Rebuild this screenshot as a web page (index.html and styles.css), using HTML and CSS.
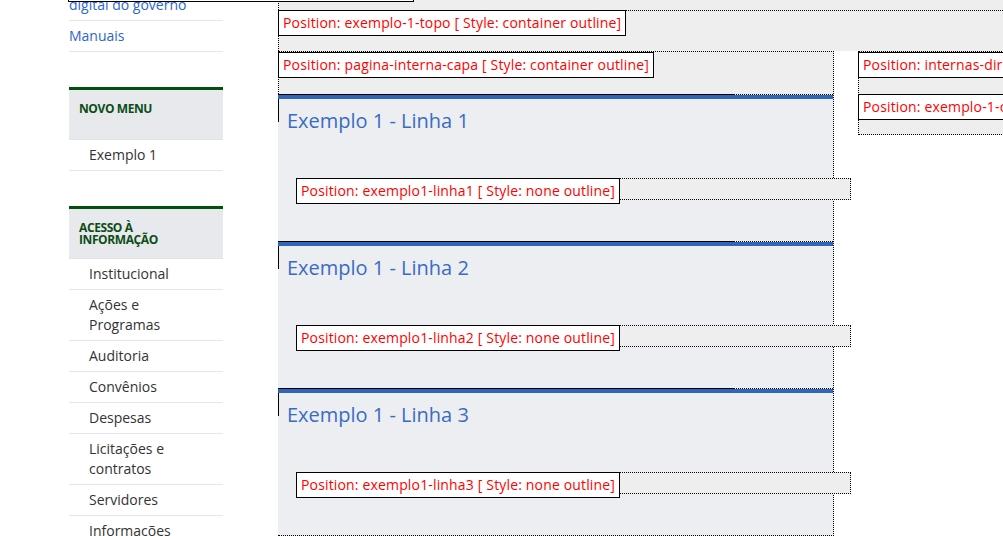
FILE: index.html
```html
<!DOCTYPE html>
<html lang="pt-BR">
<head>
<meta charset="utf-8">
<title>Layout</title>
<link rel="stylesheet" href="styles.css">
</head>
<body>
<div class="ghost-label"></div>
<div class="layout">
  <aside class="sidebar">
    <ul class="links">
      <li><a href="#">Identidade<br>digital do governo</a></li>
      <li><a href="#">Manuais</a></li>
    </ul>
    <section class="portlet">
      <h2 class="portlet-head">NOVO MENU</h2>
      <ul class="menu">
        <li>Exemplo 1</li>
      </ul>
    </section>
    <section class="portlet">
      <h2 class="portlet-head">ACESSO À INFORMAÇÃO</h2>
      <ul class="menu">
        <li>Institucional</li>
        <li>Ações e<br>Programas</li>
        <li>Auditoria</li>
        <li>Convênios</li>
        <li>Despesas</li>
        <li>Licitações e<br>contratos</li>
        <li>Servidores</li>
        <li>Informações</li>
      </ul>
    </section>
  </aside>
  <main class="main">
    <div class="strip"></div>
    <div class="topo">
      <div class="label overlap">Position: exemplo-1-topo [ Style: container outline]</div>
    </div>
    <div class="cols">
      <div class="col-left">
        <div class="label">Position: pagina-interna-capa [ Style: container outline]</div>
        <div class="sections">
          <section class="sec">
            <div class="bar"></div>
            <div class="sec-body">
              <h3 class="sec-title">Exemplo 1 - Linha 1</h3>
              <div class="slot"><div class="label overlap">Position: exemplo1-linha1 [ Style: none outline]</div></div>
            </div>
          </section>
          <section class="sec">
            <div class="bar"></div>
            <div class="sec-body">
              <h3 class="sec-title">Exemplo 1 - Linha 2</h3>
              <div class="slot"><div class="label overlap">Position: exemplo1-linha2 [ Style: none outline]</div></div>
            </div>
          </section>
          <section class="sec">
            <div class="bar"></div>
            <div class="sec-body">
              <h3 class="sec-title">Exemplo 1 - Linha 3</h3>
              <div class="slot"><div class="label overlap">Position: exemplo1-linha3 [ Style: none outline]</div></div>
            </div>
          </section>
        </div>
      </div>
      <div class="col-right">
        <div class="label">Position: internas-direita [ Style: container outline]</div>
        <div class="inner">
          <div class="label overlap">Position: exemplo-1-coluna-direita [ Style: none outline]</div>
        </div>
      </div>
    </div>
  </main>
</div>
</body>
</html>
```
FILE: styles.css
```css
* { box-sizing: border-box; }
html, body { margin: 0; padding: 0; }
body {
  background: #fff;
  font-family: "Open Sans", "DejaVu Sans", sans-serif;
  width: 1003px;
  height: 536px;
  overflow: hidden;
  position: relative;
}
.ghost-label {
  position: absolute;
  left: 68px;
  top: -30px;
  width: 346px;
  height: 32px;
  border: 1px solid #000;
  background: #fff;
  z-index: 5;
}
.layout {
  display: flex;
  align-items: flex-start;
}
.sidebar {
  width: 154px;
  flex: none;
  margin-left: 69px;
  margin-top: -30px;
}
.sidebar ul { list-style: none; margin: 0; padding: 0; }
.links li {
  border-bottom: 1px solid #e6e6e6;
  padding: 5px 0;
  font-size: 14px;
  line-height: 20px;
}
.links a { color: #2c66ce; text-decoration: none; }
.portlet {
  margin-top: 35px;
  border-top: 3px solid #00500f;
}
.portlet-head {
  margin: 0;
  height: 50px;
  padding: 13px 40px 0 10px;
  background: #e8e9ec;
  border-bottom: 1px solid #e2e3e6;
  color: #0b4d16;
  font-size: 12px;
  line-height: 12px;
  font-weight: 700;
  letter-spacing: -0.4px;
}
.menu li {
  border-bottom: 1px solid #e6e6e6;
  padding: 5px 0 5px 20px;
  font-size: 14px;
  line-height: 20px;
  color: #333;
}
.main {
  flex: 1;
  margin-left: 55px;
  min-width: 0;
}
.strip {
  height: 10px;
  background: #eee;
  border-left: 1px dotted #000;
}
.label {
  display: inline-block;
  background: #fff;
  border: 1px solid #000;
  color: #f00;
  font-size: 14px;
  line-height: 24px;
  height: 26px;
  padding: 0 4px;
  letter-spacing: 0.16px;
  white-space: nowrap;
  position: relative;
  z-index: 2;
}
.overlap { margin-top: -1px; margin-left: -1px; }
.topo {
  background: #eee;
  border-top: 1px dotted #000;
  border-left: 1px dotted #000;
  height: 41px;
}
.cols {
  display: flex;
  align-items: flex-start;
}
.col-left {
  flex: none;
  width: 556px;
  background: #eee;
  border-top: 1px dotted #000;
  border-left: 1px dotted #000;
  border-right: 1px dotted #000;
  border-bottom: 1px dotted #000;
  position: relative;
}
.col-left > .label { margin-left: -1px; }
.sections { margin-top: 16px; }
.sec {
  position: relative;
  border-top: 1px dotted #000;
  margin-left: -1px;
}
.sec::before {
  content: "";
  position: absolute;
  left: 0;
  top: -1px;
  width: 456px;
  height: 27px;
  border-top: 1px solid #000;
  border-left: 1px solid #000;
  z-index: 1;
}
.bar { height: 4px; background: #2f66b8; position: relative; z-index: 2; }
.sec-body {
  height: 142px;
  background: #edeef1;
  padding: 10px 0 0 9px;
}
.sec-title {
  margin: 0;
  font-size: 20px;
  line-height: 24px;
  font-weight: 400;
  color: #386cc4;
}
.slot {
  margin: 45px 0 0 9px;
  width: 555px;
  height: 22px;
  border: 1px dotted #000;
  background: #eee;
  position: relative;
  z-index: 3;
}
.col-right {
  flex: none;
  width: 400px;
  margin-left: 24px;
  background: #eee;
  border-top: 1px dotted #000;
  border-left: 1px dotted #000;
}
.col-right > .label { margin-left: -1px; }
.inner {
  margin-top: 16px;
  margin-left: -1px;
  height: 41px;
  border-top: 1px dotted #000;
  border-left: 1px dotted #000;
  border-bottom: 1px dotted #000;
}
```
